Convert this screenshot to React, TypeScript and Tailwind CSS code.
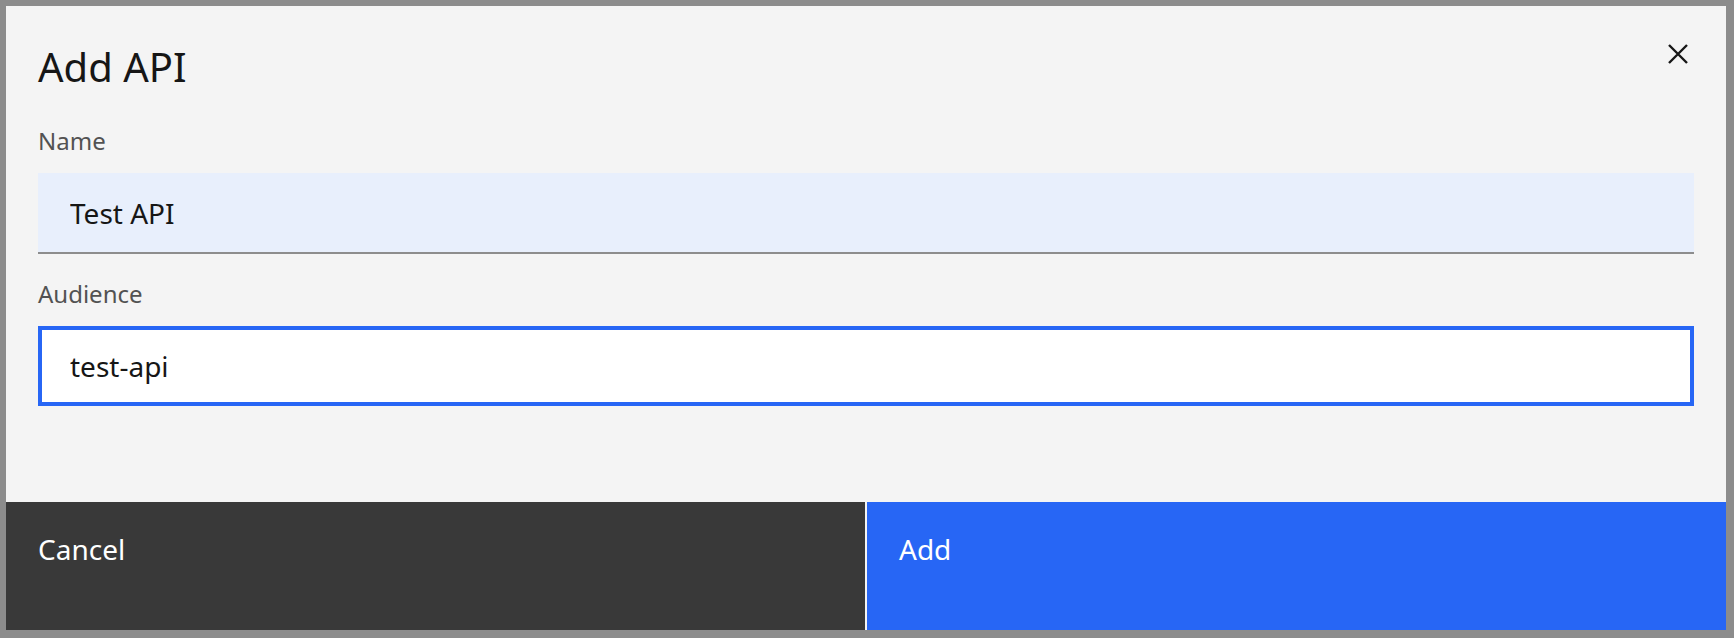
import { useState } from "react";

const font = { fontFamily: '"Noto Sans", "Open Sans", sans-serif' };

function CloseIcon() {
  return (
    <svg width="20" height="20" viewBox="0 0 20 20" fill="none">
      <path d="M1 1L19 19M19 1L1 19" stroke="#161616" strokeWidth="2.4" />
    </svg>
  );
}

export default function App() {
  const [name, setName] = useState("Test API");
  const [audience, setAudience] = useState("test-api");

  return (
    <div
      className="w-[1734px] h-[638px] bg-[#8c8c8c] pt-[6px] pl-[6px] pr-[8px] pb-[8px]"
      style={font}
    >
      <div className="relative flex h-full flex-col bg-[#f4f4f4]">
        <button className="absolute right-[38px] top-[38px] flex h-[20px] w-[20px] items-center justify-center">
          <CloseIcon />
        </button>

        <div className="px-[32px] pt-[37px]">
          <h2 className="text-[40px] leading-[48px] font-normal text-[#161616]">Add API</h2>

          <label className="mt-[34px] block text-[24px] leading-[32px] text-[#525252]">
            Name
          </label>
          <input
            value={name}
            onChange={(e) => setName(e.target.value)}
            className="mt-[16px] block h-[81px] w-full border-b-2 border-[#8d8d8d] bg-[#e8effc] px-[32px] text-[28px] text-[#161616] outline-none"
          />

          <label className="mt-[24px] block text-[24px] leading-[32px] text-[#525252]">
            Audience
          </label>
          <input
            value={audience}
            onChange={(e) => setAudience(e.target.value)}
            className="mt-[16px] block h-[80px] w-full border-4 border-[#2766f5] bg-white px-[28px] text-[28px] text-[#161616] outline-none"
          />
        </div>

        <div className="mt-auto grid h-[128px] grid-cols-2 gap-[2px]">
          <button className="flex items-start bg-[#393939] pl-[32px] pt-[29px] text-left text-[28px] leading-[36px] text-white">
            Cancel
          </button>
          <button className="flex items-start bg-[#2766f5] pl-[32px] pt-[29px] text-left text-[28px] leading-[36px] text-white">
            Add
          </button>
        </div>
      </div>
    </div>
  );
}
